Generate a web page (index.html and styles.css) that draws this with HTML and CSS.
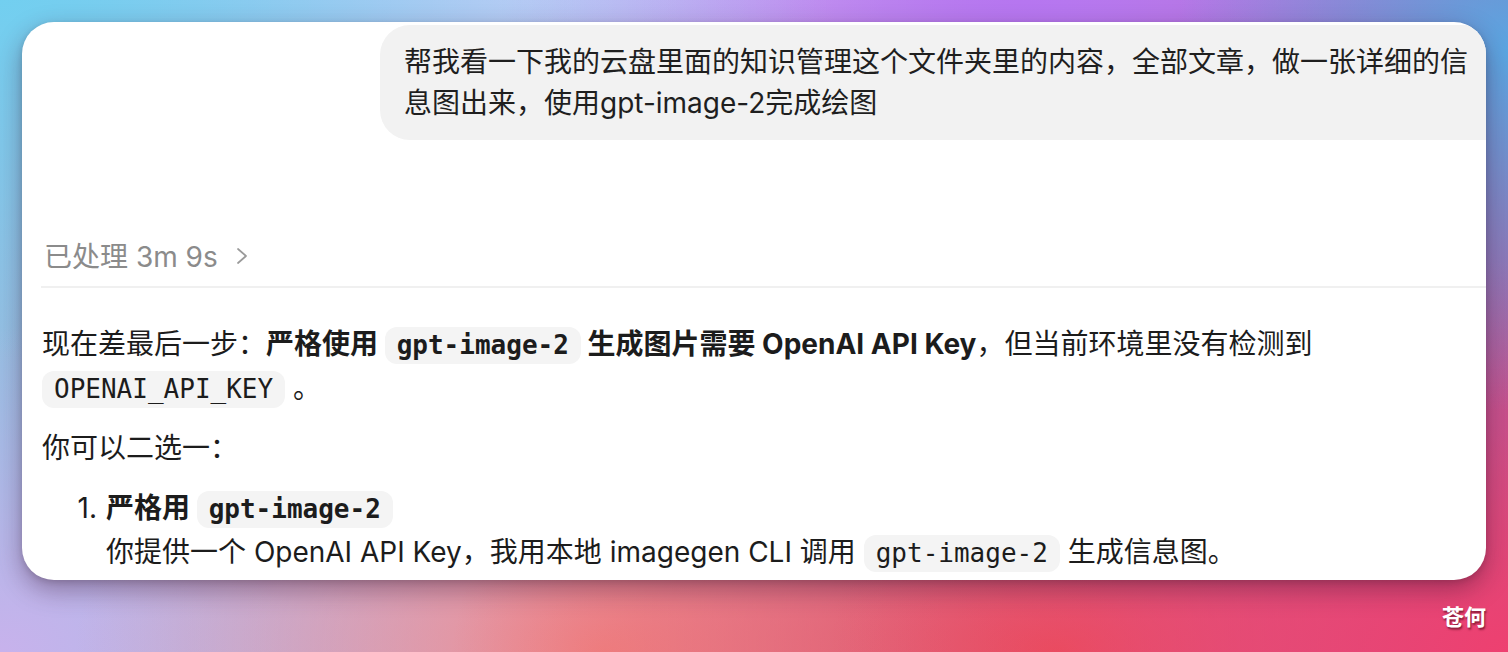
FILE: index.html
```html
<!DOCTYPE html>
<html lang="zh-CN">
<head>
<meta charset="utf-8">
<title>Chat</title>
<link rel="stylesheet" href="styles.css">
</head>
<body>
<div class="page">
  <div class="window">
    <div class="user-row">
      <div class="bubble">帮我看一下我的云盘里面的知识管理这个文件夹里的内容，全部文章，做一张详细的信<br>息图出来，使用gpt-image-2完成绘图</div>
    </div>
    <div class="meta">
      <span>已处理 3m 9s</span>
      <svg class="chev" width="14" height="20" viewBox="0 0 14 20"><polyline points="3,3 11,10 3,17" fill="none" stroke="#9a9a9a" stroke-width="1.7" stroke-linecap="round" stroke-linejoin="round"/></svg>
    </div>
    <div class="divider"></div>
    <div class="answer">
      <p class="para">现在差最后一步：<strong>严格使用 <code class="code bold">gpt-image-2</code> 生成图片需要 OpenAI API Key</strong>，但当前环境里没有检测到 <code class="code">OPENAI_API_KEY</code> 。</p>
      <p class="para">你可以二选一：</p>
      <ol class="list">
        <li class="item">
          <span class="num">1.</span>
          <div class="item-body">
            <div><strong>严格用 <code class="code bold">gpt-image-2</code></strong></div>
            <div>你提供一个 OpenAI API Key，我用本地 imagegen CLI 调用 <code class="code">gpt-image-2</code> 生成信息图。</div>
          </div>
        </li>
      </ol>
    </div>
  </div>
  <div class="footer"><span class="mark">苍何</span></div>
</div>
</body>
</html>
```

FILE: styles.css
```css
html, body {
  margin: 0;
  padding: 0;
}

body {
  width: 1508px;
  height: 652px;
  overflow: hidden;
  font-family: Inter, "Noto Sans CJK SC", sans-serif;
  background-color: #d6b4e4;
  background-image:
    radial-gradient(55% 55% at 0% 0%, #72cff0 0%, rgba(114,207,240,0) 100%),
    radial-gradient(22% 55% at 100% 8%, #5aa6e2 0%, rgba(90,166,226,0) 100%),
    radial-gradient(35% 45% at 68% 0%, #b676f0 0%, rgba(182,118,240,0) 100%),
    radial-gradient(30% 45% at 35% 0%, #dccaf6 0%, rgba(220,202,246,0) 100%),
    radial-gradient(45% 60% at 100% 100%, #ee4070 0%, rgba(238,64,112,0) 100%),
    radial-gradient(40% 50% at 70% 100%, #e85058 0%, rgba(232,80,88,0) 100%),
    radial-gradient(35% 50% at 40% 100%, #f08a8a 0%, rgba(240,138,138,0) 100%),
    radial-gradient(30% 50% at 0% 100%, #c8b2ec 0%, rgba(200,178,236,0) 100%),
    linear-gradient(90deg, #96c0e4 0%, #cdb8ee 40%, #b884e6 70%, #b05a9c 100%);
}

.page {
  padding: 22px 22px 0;
}

.window {
  height: 558px;
  box-sizing: border-box;
  background: #ffffff;
  border-radius: 32px;
  overflow: hidden;
  box-shadow: 0 10px 26px rgba(60, 20, 50, 0.4), 0 2px 6px rgba(0, 0, 0, 0.14);
  padding: 3px 0 0 20px;
  color: #1c1c1c;
}

.user-row {
  display: flex;
}

.bubble {
  margin-left: 338px;
  flex: 1;
  background: #f2f2f2;
  border-radius: 30px 0 0 30px;
  padding: 17px 24px 16px;
  font-size: 28px;
  line-height: 41px;
  color: #1f1f1f;
  white-space: nowrap;
}

.meta {
  display: flex;
  align-items: center;
  gap: 17px;
  margin-top: 97px;
  padding-left: 2px;
  height: 36px;
  font-size: 28px;
  color: #8b8b8b;
}

.chev {
  display: block;
  margin-top: 1px;
}

.divider {
  height: 2px;
  background: #f0f0f0;
  margin-top: 13px;
  margin-left: -1px;
}

.answer {
  padding-top: 35px;
  padding-right: 20px;
  font-size: 28px;
  line-height: 43px;
}

.para {
  margin: 0 0 16px;
}

strong {
  font-weight: 700;
}

.code {
  font-family: "DejaVu Sans Mono", monospace;
  font-size: 26px;
  background: #f4f4f4;
  border-radius: 12px;
  padding: 3px 12px 4px;
  white-space: nowrap;
  color: #1c1c1c;
}

.code.bold {
  font-weight: 700;
}

.list {
  list-style: none;
  margin: 17px 0 0;
  padding: 0;
}

.item {
  display: flex;
  gap: 9px;
}

.num {
  width: 55px;
  text-align: right;
  flex: none;
}

.item-body {
  flex: 1;
}

.footer {
  display: flex;
  justify-content: flex-end;
  margin-top: 22px;
}

.mark {
  font-family: "Noto Sans CJK SC", sans-serif;
  font-size: 22px;
  line-height: 26px;
  font-weight: 700;
  color: #ffffff;
  text-shadow: 1px 2px 2px rgba(90, 10, 30, 0.7);
}
```
